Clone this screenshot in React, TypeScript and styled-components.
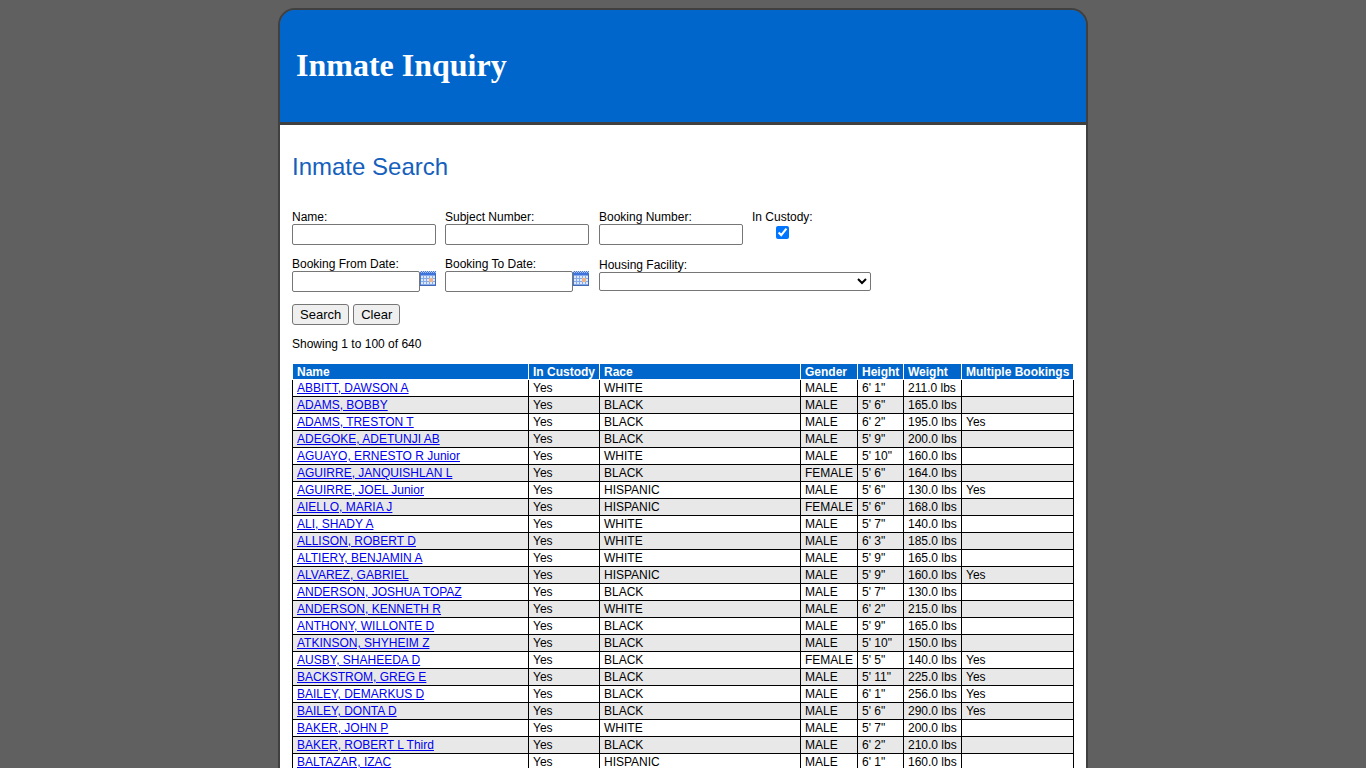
import React from 'react';
import styled, { createGlobalStyle } from 'styled-components';

const GlobalStyle = createGlobalStyle`
  body {
    margin: 0;
    background: #606060;
    color: #000;
    font-family: Arial, "Liberation Sans", sans-serif;
    font-size: 12px;
    line-height: 14px;
  }
`;

const Page = styled.div`
  box-sizing: border-box;
  max-width: 810px;
  margin: 8px auto 0;
  border: 2px solid #404040;
  border-radius: 17px 17px 0 0;
`;

const Header = styled.header`
  display: flex;
  align-items: center;
  box-sizing: border-box;
  height: 115px;
  padding: 0 16px 2px;
  background: #0066cc;
  border-bottom: 3px solid #404040;
  border-radius: 15px 15px 0 0;
`;

const SiteTitle = styled.h1`
  margin: 0;
  color: #fff;
  font: bold 32px/36px "Times New Roman", "Liberation Serif", serif;
`;

const Content = styled.main`
  padding: 28px 12px 12px;
  background: #fff;
`;

const Title = styled.h2`
  margin: 0 0 29px;
  color: #1560bd;
  font-size: 24px;
  font-weight: normal;
  line-height: 28px;
`;

const Fields = styled.div`
  display: grid;
  grid-template-columns: 153px 154px 153px 1fr;
  row-gap: 12px;
  align-items: center;
`;

const Field = styled.div<{ $wide?: boolean; $centered?: boolean }>`
  display: flex;
  flex-direction: column;
  align-items: ${(p) => (p.$centered ? 'center' : 'flex-start')};
  justify-self: start;
  grid-column: ${(p) => (p.$wide ? 'span 2' : 'auto')};
`;

const Label = styled.label`
  line-height: 14px;
`;

const TextInput = styled.input<{ $width: number }>`
  box-sizing: border-box;
  width: ${(p) => p.$width}px;
  height: 21px;
  padding: 1px 2px;
  border: 1px solid #767676;
  border-radius: 2px;
  background: #fff;
  font: 13px Arial, "Liberation Sans", sans-serif;
`;

const DateRow = styled.div`
  display: flex;
  align-items: flex-start;
`;

const CalendarButton = styled.button`
  flex: none;
  width: 16px;
  height: 16px;
  padding: 0;
  border: 0;
  background: none;

  svg {
    display: block;
  }
`;

const Check = styled.input`
  width: 13px;
  height: 13px;
  margin: 2px 0 6px;
`;

const Select = styled.select`
  width: 272px;
  height: 19px;
  border: 1px solid #767676;
  border-radius: 2px;
  background: #fff;
  font: 13px Arial, "Liberation Sans", sans-serif;
`;

const Actions = styled.div`
  display: flex;
  gap: 4px;
  margin: 12px 0;
`;

const Button = styled.button`
  height: 21px;
  padding: 0 7px;
  border: 1px solid #767676;
  border-radius: 3px;
  background: #efefef;
  color: #000;
  font: 13px/15px Arial, "Liberation Sans", sans-serif;
`;

const Summary = styled.p`
  margin: 0 0 12px;
`;

const Table = styled.table`
  width: 100%;
  table-layout: fixed;
  border-collapse: collapse;
`;

const Col = styled.col<{ $width: number }>`
  width: ${(p) => p.$width}px;
`;

const HeadCell = styled.th`
  padding: 1px 4px 0;
  border: 1px solid #fff;
  background: #0066cc;
  color: #fff;
  line-height: 14px;
  text-align: left;
  white-space: nowrap;
`;

const Row = styled.tr`
  &:nth-child(even) {
    background: #e8e8e8;
  }
`;

const Cell = styled.td`
  height: 14px;
  padding: 1px 4px;
  border: 1px solid #000;
  line-height: 14px;
  white-space: nowrap;
`;

const NameLink = styled.a`
  color: #0000ee;
  text-decoration: underline;
`;

function CalendarIcon() {
  return (
    <svg width="16" height="16" viewBox="0 0 16 16" shapeRendering="crispEdges" aria-hidden="true">
      <rect width="16" height="15" fill="#4a7bd0" />
      <path d="M0 0.5h16" stroke="#c9dbf8" strokeDasharray="1 1" />
      <path d="M0 2.5h16" stroke="#3f74dc" strokeWidth="3" />
      <path d="M1 1.5h15" stroke="#a9c4f4" strokeDasharray="1 1" />
      <rect x="1" y="4" width="14" height="10" fill="#86aaea" />
      {[5, 8, 11].map((y) =>
        [1, 4, 7, 10, 13].map((x) => (
          <rect key={`${x}-${y}`} x={x} y={y} width="2" height="2" fill="#dce8fc" />
        ))
      )}
      <rect x="9" y="7" width="4" height="4" fill="#e9b48c" />
      <path d="M0 14.5h16M15.5 3v12" stroke="#4068b4" />
    </svg>
  );
}

function TextField({ id, label }: { id: string; label: string }) {
  return (
    <Field>
      <Label htmlFor={id}>{label}</Label>
      <TextInput id={id} type="text" $width={144} />
    </Field>
  );
}

function DateField({ id, label }: { id: string; label: string }) {
  return (
    <Field>
      <Label htmlFor={id}>{label}</Label>
      <DateRow>
        <TextInput id={id} type="text" $width={128} />
        <CalendarButton type="button" aria-labelledby={id}>
          <CalendarIcon />
        </CalendarButton>
      </DateRow>
    </Field>
  );
}

const columns: [string, number][] = [
  ['Name', 236],
  ['In Custody', 71],
  ['Race', 201],
  ['Gender', 57],
  ['Height', 46],
  ['Weight', 58],
  ['Multiple Bookings', 112],
];

// name, race, gender, height, weight, multiple bookings
const inmates: [string, string, string, string, string, string][] = [
  ['ABBITT, DAWSON A', 'WHITE', 'MALE', `6' 1"`, '211.0 lbs', ''],
  ['ADAMS, BOBBY', 'BLACK', 'MALE', `5' 6"`, '165.0 lbs', ''],
  ['ADAMS, TRESTON T', 'BLACK', 'MALE', `6' 2"`, '195.0 lbs', 'Yes'],
  ['ADEGOKE, ADETUNJI AB', 'BLACK', 'MALE', `5' 9"`, '200.0 lbs', ''],
  ['AGUAYO, ERNESTO R Junior', 'WHITE', 'MALE', `5' 10"`, '160.0 lbs', ''],
  ['AGUIRRE, JANQUISHLAN L', 'BLACK', 'FEMALE', `5' 6"`, '164.0 lbs', ''],
  ['AGUIRRE, JOEL Junior', 'HISPANIC', 'MALE', `5' 6"`, '130.0 lbs', 'Yes'],
  ['AIELLO, MARIA J', 'HISPANIC', 'FEMALE', `5' 6"`, '168.0 lbs', ''],
  ['ALI, SHADY A', 'WHITE', 'MALE', `5' 7"`, '140.0 lbs', ''],
  ['ALLISON, ROBERT D', 'WHITE', 'MALE', `6' 3"`, '185.0 lbs', ''],
  ['ALTIERY, BENJAMIN A', 'WHITE', 'MALE', `5' 9"`, '165.0 lbs', ''],
  ['ALVAREZ, GABRIEL', 'HISPANIC', 'MALE', `5' 9"`, '160.0 lbs', 'Yes'],
  ['ANDERSON, JOSHUA TOPAZ', 'BLACK', 'MALE', `5' 7"`, '130.0 lbs', ''],
  ['ANDERSON, KENNETH R', 'WHITE', 'MALE', `6' 2"`, '215.0 lbs', ''],
  ['ANTHONY, WILLONTE D', 'BLACK', 'MALE', `5' 9"`, '165.0 lbs', ''],
  ['ATKINSON, SHYHEIM Z', 'BLACK', 'MALE', `5' 10"`, '150.0 lbs', ''],
  ['AUSBY, SHAHEEDA D', 'BLACK', 'FEMALE', `5' 5"`, '140.0 lbs', 'Yes'],
  ['BACKSTROM, GREG E', 'BLACK', 'MALE', `5' 11"`, '225.0 lbs', 'Yes'],
  ['BAILEY, DEMARKUS D', 'BLACK', 'MALE', `6' 1"`, '256.0 lbs', 'Yes'],
  ['BAILEY, DONTA D', 'BLACK', 'MALE', `5' 6"`, '290.0 lbs', 'Yes'],
  ['BAKER, JOHN P', 'WHITE', 'MALE', `5' 7"`, '200.0 lbs', ''],
  ['BAKER, ROBERT L Third', 'BLACK', 'MALE', `6' 2"`, '210.0 lbs', ''],
  ['BALTAZAR, IZAC', 'HISPANIC', 'MALE', `6' 1"`, '160.0 lbs', ''],
];

export default function App() {
  return (
    <>
      <GlobalStyle />
      <Page>
        <Header>
          <SiteTitle>Inmate Inquiry</SiteTitle>
        </Header>
        <Content>
          <Title>Inmate Search</Title>
          <form onSubmit={(e) => e.preventDefault()}>
            <Fields>
              <TextField id="name" label="Name:" />
              <TextField id="subject" label="Subject Number:" />
              <TextField id="booking" label="Booking Number:" />
              <Field $centered>
                <Label htmlFor="custody">In Custody:</Label>
                <Check id="custody" type="checkbox" defaultChecked />
              </Field>
              <DateField id="from" label="Booking From Date:" />
              <DateField id="to" label="Booking To Date:" />
              <Field $wide>
                <Label htmlFor="facility">Housing Facility:</Label>
                <Select id="facility" />
              </Field>
            </Fields>
            <Actions>
              <Button type="submit">Search</Button>
              <Button type="reset">Clear</Button>
            </Actions>
          </form>
          <Summary>Showing 1 to 100 of 640</Summary>
          <Table>
            <colgroup>
              {columns.map(([label, width]) => (
                <Col key={label} $width={width} />
              ))}
            </colgroup>
            <thead>
              <tr>
                {columns.map(([label]) => (
                  <HeadCell key={label} scope="col">{label}</HeadCell>
                ))}
              </tr>
            </thead>
            <tbody>
              {inmates.map(([name, ...details]) => (
                <Row key={name}>
                  <Cell>
                    <NameLink href="#">{name}</NameLink>
                  </Cell>
                  <Cell>Yes</Cell>
                  {details.map((value, i) => (
                    <Cell key={i}>{value}</Cell>
                  ))}
                </Row>
              ))}
            </tbody>
          </Table>
        </Content>
      </Page>
    </>
  );
}
